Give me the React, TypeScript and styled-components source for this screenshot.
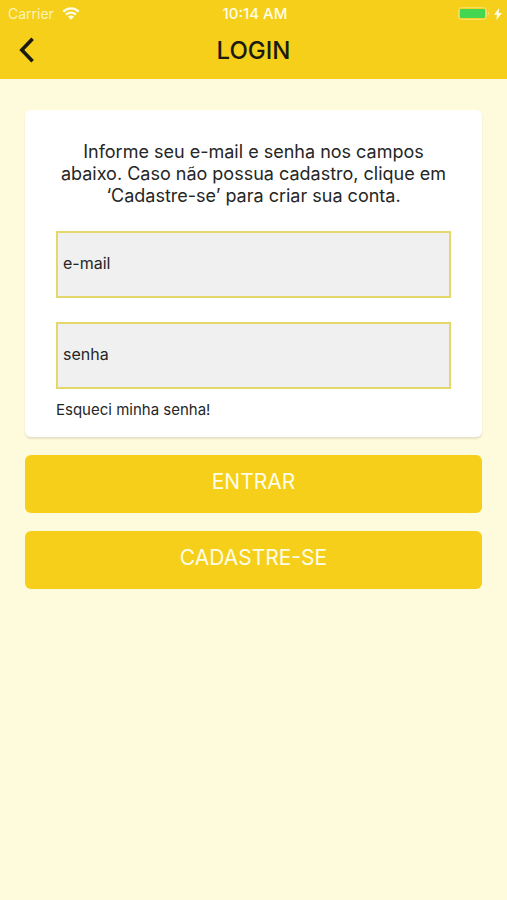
import { FormEvent } from "react";
import styled, { createGlobalStyle } from "styled-components";

const App = () => {
  const handleSubmit = (event: FormEvent) => {
    event.preventDefault();
  };

  return (
    <>
      <GlobalStyle />
      <Header>
        <StatusBar>
          <Carrier>
            Carrier
            <IconWifi />
          </Carrier>
          <Time>10:14 AM</Time>
          <Battery>
            <IconBattery />
            <IconBolt />
          </Battery>
        </StatusBar>
        <NavBar>
          <BackButton type="button" aria-label="Voltar">
            <IconBack />
          </BackButton>
          <Title>LOGIN</Title>
        </NavBar>
      </Header>
      <Form onSubmit={handleSubmit}>
        <Card>
          <Message>
            Informe seu e-mail e senha nos campos abaixo. Caso não possua
            cadastro, clique em ‘Cadastre-se’ para criar sua conta.
          </Message>
          <Fields>
            <Input type="email" placeholder="e-mail" aria-label="e-mail" />
            <Input type="password" placeholder="senha" aria-label="senha" />
          </Fields>
          <ForgotLink href="#">Esqueci minha senha!</ForgotLink>
        </Card>
        <Button type="submit">ENTRAR</Button>
        <Button type="button">CADASTRE-SE</Button>
      </Form>
    </>
  );
};

const IconWifi = () => (
  <svg width="18" height="13" viewBox="0 0 18 13" fill="none">
    <path
      d="M1.3 4.6a10.8 10.8 0 0 1 15.4 0M4.1 7.6a7 7 0 0 1 9.8 0"
      stroke="#fffde8"
      strokeWidth="2.3"
    />
    <path d="M6 9.8a4.4 4.4 0 0 1 6 0L9 12.8z" fill="#fffde8" />
  </svg>
);

const IconBattery = () => (
  <svg width="32" height="13" viewBox="0 0 32 13" fill="none">
    <rect
      x="0.7"
      y="0.7"
      width="27.6"
      height="11.6"
      rx="2.5"
      stroke="#f8e26e"
    />
    <rect x="2" y="2" width="25" height="9" rx="1" fill="#44d650" />
    <path d="M30 4.6a2.3 2.3 0 0 1 0 3.8z" fill="#f8e58a" />
  </svg>
);

const IconBolt = () => (
  <svg width="8" height="12" viewBox="0 0 8 12">
    <path d="M5 0L0 6.8h3L2.4 12L8 5H4.8z" fill="#fffde8" />
  </svg>
);

const IconBack = () => (
  <svg width="16" height="26" viewBox="0 0 16 26" fill="none">
    <path d="M13.6 1.8L2.8 13L13.6 24.2" stroke="#1b1a10" strokeWidth="3.6" />
  </svg>
);

const GlobalStyle = createGlobalStyle`
  * {
    box-sizing: border-box;
  }

  body {
    margin: 0;
    min-height: 100vh;
    background-color: #fefbdc;
    color: #262626;
    font-family: Inter, "Liberation Sans", sans-serif;
  }

  svg {
    display: block;
    flex-shrink: 0;
  }
`;

const Header = styled.header`
  background-color: #f5cf19;
`;

const StatusBar = styled.div`
  display: grid;
  grid-template-columns: 1fr auto 1fr;
  align-items: center;
  height: 27px;
  padding: 0 5px 0 8px;
  color: #fffde8;
  font-size: 14px;
`;

const Carrier = styled.div`
  display: flex;
  align-items: center;
  gap: 8px;
  color: #fdf3ba;
`;

const Time = styled.time`
  font-size: 15px;
  font-weight: 500;
`;

const Battery = styled.div`
  display: flex;
  align-items: center;
  justify-content: flex-end;
  gap: 4px;
`;

const NavBar = styled.div`
  display: grid;
  grid-template-columns: 52px 1fr 52px;
  align-items: center;
  height: 52px;
  padding-bottom: 6px;
`;

const BackButton = styled.button`
  display: flex;
  padding: 0 19px;
  border: none;
  background: none;
  cursor: pointer;
`;

const Title = styled.h1`
  margin: 0;
  color: #1b1a10;
  font-size: 24px;
  font-weight: 500;
  text-align: center;
`;

const Form = styled.form`
  display: flex;
  flex-direction: column;
  gap: 18px;
  padding: 31px 25px;
`;

const Card = styled.section`
  padding: 31px 31px 17px;
  border-radius: 6px;
  background-color: #fff;
  box-shadow: 0 2px 2px rgba(0, 0, 0, 0.1);
`;

const Message = styled.p`
  margin: 0 0 24px;
  font-size: 18px;
  line-height: 22px;
  text-align: center;
`;

const Fields = styled.div`
  display: flex;
  flex-direction: column;
  gap: 24px;
`;

const Input = styled.input`
  width: 100%;
  height: 67px;
  padding: 0 5px 4px;
  border: 2px solid #e3d869;
  border-radius: 0;
  background-color: #f0f0f0;
  color: #262626;
  font-family: inherit;
  font-size: 16px;

  &::placeholder {
    color: #262626;
    opacity: 1;
  }
`;

const ForgotLink = styled.a`
  display: block;
  margin-top: 11px;
  color: #262626;
  font-size: 15px;
  line-height: 20px;
  text-decoration: none;
`;

const Button = styled.button`
  height: 58px;
  padding: 0 0 6px;
  border: none;
  border-radius: 6px;
  background-color: #f5cf19;
  color: #fffde8;
  font-family: inherit;
  font-size: 21px;
  cursor: pointer;
`;

export default App;
